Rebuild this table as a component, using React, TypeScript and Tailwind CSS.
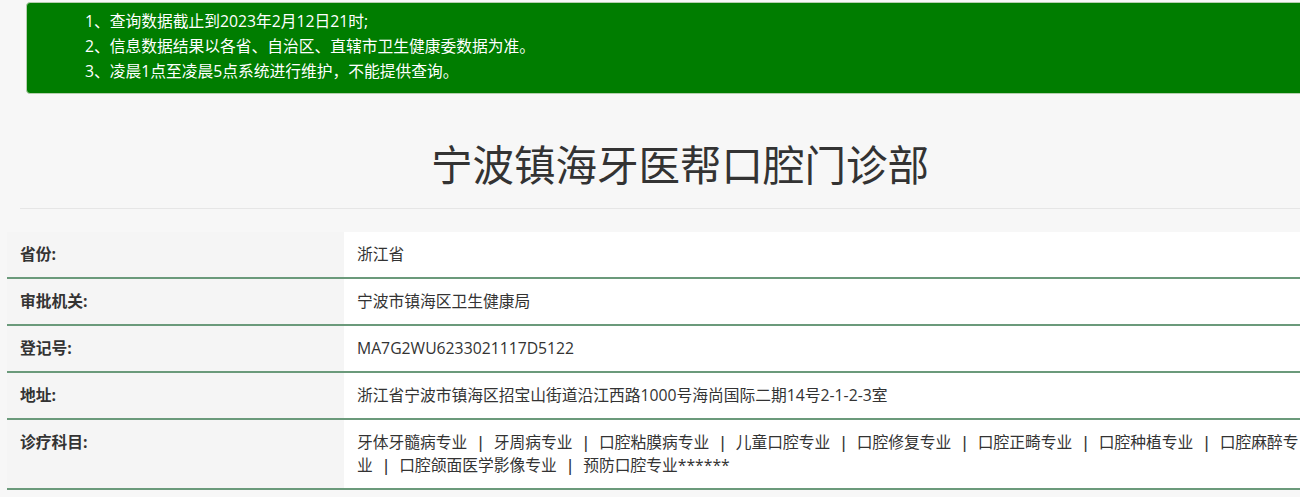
const subjects = [
  "牙体牙髓病专业",
  "牙周病专业",
  "口腔粘膜病专业",
  "儿童口腔专业",
  "口腔修复专业",
  "口腔正畸专业",
  "口腔种植专业",
  "口腔麻醉专业",
  "口腔颌面医学影像专业",
  "预防口腔专业******",
];

const rows: { label: string; value: React.ReactNode }[] = [
  { label: "省份:", value: "浙江省" },
  { label: "审批机关:", value: "宁波市镇海区卫生健康局" },
  { label: "登记号:", value: "MA7G2WU6233021117D5122" },
  { label: "地址:", value: "浙江省宁波市镇海区招宝山街道沿江西路1000号海尚国际二期14号2-1-2-3室" },
  {
    label: "诊疗科目:",
    value: subjects.map((s, i) => (
      <span key={s}>
        {i > 0 && <span className="inline-block w-[26.5px] text-center font-semibold">|</span>}
        {s}
      </span>
    )),
  },
];

const notes = [
  "1、查询数据截止到2023年2月12日21时;",
  "2、信息数据结果以各省、自治区、直辖市卫生健康委数据为准。",
  "3、凌晨1点至凌晨5点系统进行维护，不能提供查询。",
];

export default function App() {
  return (
    <div className="min-h-screen w-full overflow-hidden bg-[#f7f7f7] font-['Open_Sans','Noto_Sans_CJK_SC',sans-serif] text-[#333]">
      <div className="w-[1340px]">
        {/* notice */}
        <div className="ml-[26px] mt-[2px] w-[1320px] rounded-[4px] border border-[#b5cfae] bg-[#007d00] pl-[58px] pt-[6px] pb-[9px] text-[15.75px] leading-[25px] text-white">
          {notes.map((n) => (
            <p key={n}>{n}</p>
          ))}
        </div>

        <h1 className="ml-[20px] mt-[43px] mb-[15px] w-[1320px] text-center text-[41.5px] font-normal leading-[56px] text-[#333]">
          宁波镇海牙医帮口腔门诊部
        </h1>
        <div className="ml-[20px] w-[1320px] border-t border-[#e6e6e6]" />

        <div className="ml-[7px] mt-[23px] w-[1313px] text-[15.75px] leading-[23px]">
          {rows.map((r) => (
            <div key={r.label} className="grid grid-cols-[337px_976px] border-b-2 border-[#6b9a7b]">
              <div className="bg-[#f5f5f5] py-[11px] pl-[13px] font-bold text-[#333]">{r.label}</div>
              <div className="bg-white py-[11px] pl-[13px] pr-[16px] text-[#333]">{r.value}</div>
            </div>
          ))}
        </div>
      </div>
    </div>
  );
}
